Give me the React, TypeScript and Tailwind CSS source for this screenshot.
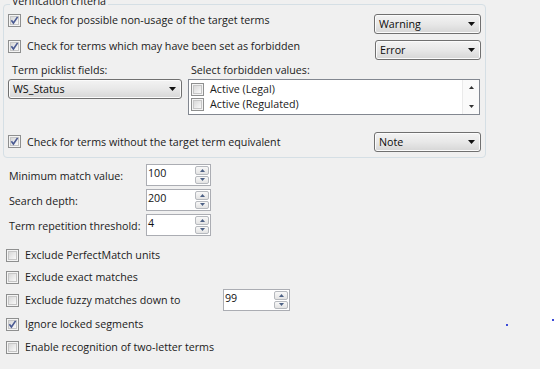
import React from "react";

const FONT = "font-['Open_Sans','Noto_Sans',sans-serif]";
const TXT = "text-[10.7px] text-[#1b1b1b]";

function CheckBox({ checked = false }: { checked?: boolean }) {
  return (
    <svg width="13" height="13" viewBox="0 0 13 13" className="shrink-0">
      <defs>
        <linearGradient id="cbg" x1="0" y1="0" x2="1" y2="1">
          <stop offset="0" stopColor="#d6d6d6" />
          <stop offset="1" stopColor="#fbfbfb" />
        </linearGradient>
      </defs>
      <rect x="0.5" y="0.5" width="12" height="12" fill="#f4f4f4" stroke="#8e8f8f" />
      <rect x="2.5" y="2.5" width="8" height="8" fill="url(#cbg)" stroke="#c6c6c6" />
      {checked && (
        <path d="M3.4 6.3 L5.4 9 L9.6 2.9" fill="none" stroke="#4a5a92" strokeWidth="1.6" />
      )}
    </svg>
  );
}

function Combo({ label, className }: { label: string; className: string }) {
  return (
    <div
      className={`flex h-[20px] shrink-0 items-center justify-between rounded-[3px] border border-[#707070] bg-gradient-to-b from-[#f3f3f3] via-[#e8e8e8] to-[#d6d6d6] pl-[4px] pr-[5px] text-[10.7px] text-[#0c0c0c] shadow-[inset_0_0_0_1px_#fbfbfb] ${className}`}
    >
      <span>{label}</span>
      <svg width="7" height="4" viewBox="0 0 7 4">
        <path d="M0 0 H7 L3.5 4 Z" fill="#111" />
      </svg>
    </div>
  );
}

function SpinArrows() {
  return (
    <div className="flex h-full w-[15px] flex-col gap-[1px] py-[1px] pr-[1px]">
      {["up", "down"].map((d) => (
        <div
          key={d}
          className="flex flex-1 items-center justify-center rounded-[2px] border border-[#b6b9be] bg-gradient-to-b from-[#f8f8f8] to-[#e3e3e3]"
        >
          <svg width="5" height="3" viewBox="0 0 5 3">
            <path d={d === "up" ? "M0 3 H5 L2.5 0 Z" : "M0 0 H5 L2.5 3 Z"} fill="#4d6185" />
          </svg>
        </div>
      ))}
    </div>
  );
}

function Spin({ value, className }: { value: string; className: string }) {
  return (
    <div className={`flex shrink-0 items-stretch border border-[#abadb3] bg-white ${className}`}>
      <span className="flex-1 pl-[1px] pt-[1px] text-[10.7px] leading-[14px] text-[#111]">{value}</span>
      <SpinArrows />
    </div>
  );
}

function CheckRow({
  label,
  checked,
  className = "",
  labelClass = "",
  children,
}: {
  label: string;
  checked?: boolean;
  className?: string;
  labelClass?: string;
  children?: React.ReactNode;
}) {
  return (
    <div className={`flex items-center ${className}`}>
      <CheckBox checked={checked} />
      <span className={`ml-[6px] whitespace-nowrap ${TXT} ${labelClass}`}>{label}</span>
      {children}
    </div>
  );
}

export default function App() {
  return (
    <div className={`flex h-[369px] w-[554px] overflow-hidden bg-white ${FONT}`}>
      <div className="relative h-full w-[540px] bg-[#f0f0f0] pl-[3px] pt-[4px]">
        {/* group box */}
        <div className="relative h-[154px] w-[483px] rounded-[4px] border border-[#d5dfe5] pl-[4px] pt-[9px]">
          <span className={`absolute left-[6px] top-[-12px] bg-[#f0f0f0] px-[2px] ${TXT}`}>
            Verification criteria
          </span>

          <div className="flex h-[20px] items-start justify-between pr-[4px]">
            <CheckRow label="Check for possible non-usage of the target terms" checked className="h-[13px]" />
            <Combo label="Warning" className="w-[107px]" />
          </div>

          <div className="mt-[6px] flex h-[20px] items-start justify-between pr-[4px]">
            <CheckRow label="Check for terms which may have been set as forbidden" checked className="h-[13px]" />
            <Combo label="Error" className="w-[106px]" />
          </div>

          <div className={`mt-[2px] flex h-[17px] items-center ${TXT}`}>
            <span className="ml-[4px] w-[179px]">Term picklist fields:</span>
            <span>Select forbidden values:</span>
          </div>

          <div className="flex items-start">
            <Combo label="WS_Status" className="w-[174px]" />
            <div className="ml-[6px] flex h-[36px] w-[292px] border border-[#828790] bg-white">
              <div className="flex flex-1 flex-col pl-[2px] pt-[2px]">
                {["Active (Legal)", "Active (Regulated)"].map((t) => (
                  <div key={t} className="flex h-[15px] items-center">
                    <CheckBox />
                    <span className={`ml-[6px] ${TXT}`}>{t}</span>
                  </div>
                ))}
              </div>
              <div className="flex w-[17px] flex-col items-center justify-between border-l border-[#eaeaea] bg-[#fafafa] py-[6px]">
                <svg width="5" height="3" viewBox="0 0 5 3">
                  <path d="M0 3 H5 L2.5 0 Z" fill="#333" />
                </svg>
                <svg width="5" height="3" viewBox="0 0 5 3">
                  <path d="M0 0 H5 L2.5 3 Z" fill="#333" />
                </svg>
              </div>
            </div>
          </div>

          <div className="mt-[17px] flex h-[20px] items-center justify-between pr-[4px]">
            <CheckRow label="Check for terms without the target term equivalent" checked />
            <Combo label="Note" className="w-[107px]" />
          </div>
        </div>

        {/* spin fields */}
        <div className={`mt-[6px] flex flex-col gap-[3px] pl-[6px] ${TXT}`}>
          {[
            ["Minimum match value:", "100"],
            ["Search depth:", "200"],
            ["Term repetition threshold:", "4"],
          ].map(([l, v]) => (
            <div key={l} className="flex h-[22px] items-center">
              <span className="w-[137px] pt-[2px]">{l}</span>
              <Spin value={v} className="h-[22px] w-[65px]" />
            </div>
          ))}
        </div>

        {/* option checkboxes */}
        <div className="mt-[12px] flex flex-col pl-[3px]">
          <CheckRow label="Exclude PerfectMatch units" className="h-[14px]" />
          <CheckRow label="Exclude exact matches" className="mt-[8px] h-[14px]" />
          <CheckRow label="Exclude fuzzy matches down to" className="mt-[9px] h-[14px]" labelClass="w-[198px]">
            <Spin value="99" className="h-[22px] w-[67px]" />
          </CheckRow>
          <CheckRow label="Ignore locked segments" checked className="mt-[10px] h-[14px]" />
          <CheckRow label="Enable recognition of two-letter terms" className="mt-[9px] h-[14px]" />
        </div>

        <span className="absolute left-[506px] top-[324px] h-[2px] w-[2px] bg-[#3b4ad8]" />
      </div>
      <div className="relative flex-1 bg-white">
        <span className="absolute left-[12px] top-[319px] h-[2px] w-[2px] bg-[#3b4ad8]" />
      </div>
    </div>
  );
}
